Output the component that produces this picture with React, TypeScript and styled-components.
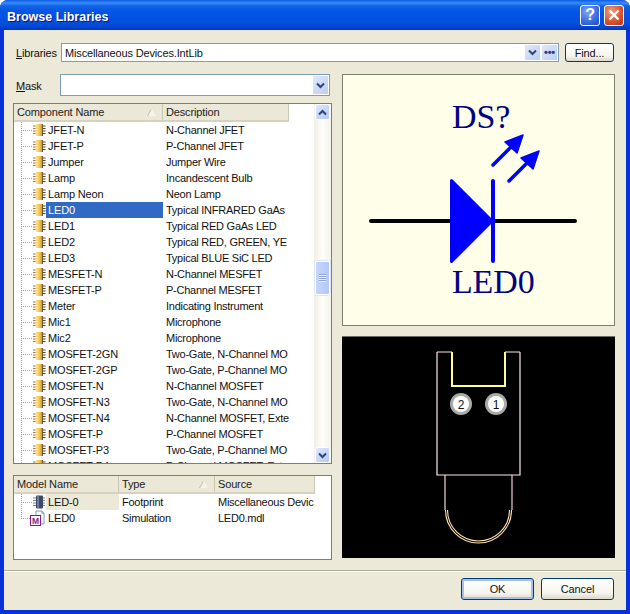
import styled, { createGlobalStyle } from "styled-components";

const GlobalStyle = createGlobalStyle`
  html, body {
    margin: 0;
    padding: 0;
    background: #fff;
  }
  * {
    box-sizing: border-box;
  }
`;

const Frame = styled.div`
  width: 630px;
  height: 614px;
  display: flex;
  flex-direction: column;
  border-radius: 8px 8px 0 0;
  overflow: hidden;
  background: #0831d9;
  font-family: "Liberation Sans", Arial, sans-serif;
  font-size: 11px;
  letter-spacing: -0.15px;
  color: #111;
`;

const TitleBar = styled.div`
  height: 30px;
  flex-shrink: 0;
  display: flex;
  align-items: center;
  padding: 3px 6px 0 7px;
  background: linear-gradient(
    to bottom,
    #0a5ae8 0,
    #3b8cf5 3px,
    #0f62e6 6px,
    #0355e4 12px,
    #0450e0 22px,
    #0346d2 27px,
    #0135b8 30px
  );
`;

const Title = styled.div`
  flex: 1;
  font-size: 12.5px;
  font-weight: bold;
  letter-spacing: 0;
  color: #fff;
  text-shadow: 1px 1px 1px #0f1089;
`;

const TitleButton = styled.div<{ $close?: boolean }>`
  width: 20px;
  height: 21px;
  margin: -3px 0 0 4px;
  border: 1px solid #fff;
  border-radius: 3px;
  display: flex;
  align-items: center;
  justify-content: center;
  font-size: 16px;
  font-weight: bold;
  color: #fff;
  background: ${(p) =>
    p.$close
      ? "radial-gradient(circle at 35% 30%, #f0a080, #d8502c 60%, #b83210)"
      : "radial-gradient(circle at 35% 30%, #7ea4f0, #3a6ae0 60%, #2246b8)"};
`;

const Client = styled.div`
  flex: 1;
  display: flex;
  flex-direction: column;
  margin: 0 4px 4px 4px;
  background: #ece9d8;
  min-height: 0;
`;

const Main = styled.div`
  padding: 13px 12px 0 9px;
`;

const LibraryRow = styled.div`
  display: flex;
  align-items: stretch;
  height: 19px;
  margin-bottom: 12px;
`;

const Label = styled.label`
  width: 48px;
  flex-shrink: 0;
  padding: 1px 0 0 3px;
  display: flex;
  align-items: center;
  u {
    text-decoration: underline;
  }
`;

const Combo = styled.div`
  flex: 1;
  display: flex;
  align-items: center;
  background: #fff;
  border: 1px solid #7f9db9;
  padding: 1px;
  gap: 2px;
`;

const ComboText = styled.div`
  flex: 1;
  padding-left: 2px;
  white-space: nowrap;
`;

const ComboButton = styled.div`
  width: 15px;
  height: 100%;
  display: flex;
  align-items: center;
  justify-content: center;
  background: linear-gradient(135deg, #dfe7fb, #bccdf6);
  border-radius: 1px;
  color: #2c3f78;
  font-size: 11px;
  font-weight: bold;
  line-height: 1;
`;

const PushButton = styled.button<{ $width: number; $isDefault?: boolean }>`
  width: ${(p) => p.$width}px;
  padding: 0;
  font: inherit;
  letter-spacing: inherit;
  color: #111;
  border: 1px solid #003c74;
  border-radius: 3px;
  background: linear-gradient(to bottom, #fff 0, #f6f5ee 70%, #dcd8cb 100%);
  box-shadow: ${(p) => (p.$isDefault ? "inset 0 0 0 2px #a6c0ea" : "none")};
`;

const FindButton = styled(PushButton)`
  margin-left: 6px;
`;

const Columns = styled.div`
  display: grid;
  grid-template-columns: 319px 273px;
  column-gap: 10px;
`;

const LeftColumn = styled.div`
  display: flex;
  flex-direction: column;
`;

const RightColumn = styled.div`
  display: flex;
  flex-direction: column;
  gap: 10px;
`;

const MaskRow = styled.div`
  display: flex;
  height: 22px;
  margin-bottom: 7px;
  padding-right: 2px;
`;

const MaskLabel = styled(Label)`
  width: 47px;
`;

const ListBox = styled.div<{ $height: number }>`
  height: ${(p) => p.$height}px;
  display: flex;
  background: #fff;
  border: 1px solid #7b7f74;
  overflow: hidden;
`;

const ListContent = styled.div`
  flex: 1;
  min-width: 0;
  overflow: hidden;
`;

const HeaderRow = styled.div`
  height: 18px;
  display: flex;
`;

const HeaderCell = styled.div<{ $width: number }>`
  width: ${(p) => p.$width}px;
  flex-shrink: 0;
  display: flex;
  align-items: center;
  justify-content: space-between;
  padding: 0 6px 0 3px;
  background: #ebe8d7;
  border-right: 1px solid #c9c6b4;
  border-bottom: 2px solid #d6d2bd;
  color: #222;
  white-space: nowrap;
`;

const SortMark = styled.span`
  width: 0;
  height: 0;
  border-left: 4px solid transparent;
  border-right: 4px solid transparent;
  border-bottom: 7px solid #f6f4ea;
  filter: drop-shadow(-1px 0 0 #c0bcaa);
`;

const Row = styled.div<{ $first: number; $second: number; $third?: number }>`
  height: 16px;
  display: grid;
  grid-template-columns: ${(p) => p.$first}px ${(p) => p.$second}px ${(p) =>
      p.$third ? `${p.$third}px` : ""};
  align-items: stretch;
`;

const TreeCell = styled.div`
  display: flex;
  align-items: center;
  padding-left: 7px;
  overflow: hidden;
`;

const Guide = styled.span<{ $last?: boolean }>`
  width: 12px;
  height: 16px;
  flex-shrink: 0;
  background-image: repeating-linear-gradient(
      to bottom,
      #a0a0a0 0 1px,
      transparent 1px 2px
    ),
    repeating-linear-gradient(to right, #a0a0a0 0 1px, transparent 1px 2px);
  background-repeat: no-repeat;
  background-position: 0 0, 0 8px;
  background-size: 1px ${(p) => (p.$last ? "9px" : "16px")}, 12px 1px;
`;

const IconSlot = styled.span`
  width: 12px;
  height: 14px;
  flex-shrink: 0;
  display: flex;
  svg {
    display: block;
    flex-shrink: 0;
  }
`;

const ModelSlot = styled(IconSlot)`
  width: 15px;
  height: 16px;
  margin-left: -3px;
`;

const NameText = styled.span<{ $state?: "selected" | "muted" }>`
  flex: 1;
  height: 16px;
  margin-left: 1px;
  padding-left: 2px;
  line-height: 16px;
  white-space: nowrap;
  background: ${(p) =>
    p.$state === "selected"
      ? "#316ac5"
      : p.$state === "muted"
        ? "#ece9d8"
        : "transparent"};
  color: ${(p) => (p.$state === "selected" ? "#fff" : "#111")};
`;

const TextCell = styled.div`
  padding-left: 3px;
  line-height: 16px;
  letter-spacing: -0.25px;
  white-space: nowrap;
  overflow: hidden;
`;

const ScrollBar = styled.div`
  width: 17px;
  flex-shrink: 0;
  display: flex;
  flex-direction: column;
  padding: 0 1px 0 1px;
  background: linear-gradient(to right, #f1efe4, #fdfdfa 50%, #f4f3ea);
`;

const ScrollButton = styled.div`
  height: 16px;
  flex-shrink: 0;
  display: flex;
  align-items: center;
  justify-content: center;
  border: 1px solid #fff;
  border-radius: 2px;
  background: linear-gradient(135deg, #dfe8fd, #b4c8f6);
`;

const ScrollTrack = styled.div`
  flex: 1;
  padding-top: 141px;
`;

const ScrollThumb = styled.div`
  height: 34px;
  display: flex;
  align-items: center;
  justify-content: center;
  border: 1px solid #fff;
  border-radius: 2px;
  background: linear-gradient(to right, #c6d5fa, #b3c8f6);
  box-shadow: 0 0 0 1px #dfe6f7;
`;

const Grip = styled.div`
  width: 7px;
  height: 8px;
  background: repeating-linear-gradient(
    to bottom,
    #8ea4d8 0 1px,
    #eef2fd 1px 2px
  );
`;

const ModelBox = styled(ListBox)`
  margin-top: 11px;
`;

const PreviewPanel = styled.div`
  height: 252px;
  background: #ffffe9;
  border: 1px solid #7f7f6f;
  svg {
    display: block;
  }
`;

const PcbPanel = styled.div`
  height: 222px;
  background: #000;
  border-top: 1px solid #6c6c60;
  svg {
    display: block;
  }
`;

const Footer = styled.div`
  margin-top: 10px;
  padding: 7px 12px 0 0;
  flex: 1;
  display: flex;
  align-items: flex-start;
  justify-content: flex-end;
  gap: 7px;
  border-top: 1px solid #aca899;
  box-shadow: inset 0 1px 0 #fff;
`;

const FooterButton = styled(PushButton)`
  height: 22px;
`;

const Chevron = ({ up }: { up?: boolean }) => (
  <svg width="9" height="7" viewBox="0 0 9 7">
    <path
      d={up ? "M1 5.5 L4.5 2 L8 5.5" : "M1 1.5 L4.5 5 L8 1.5"}
      fill="none"
      stroke="#2f4378"
      strokeWidth="2"
    />
  </svg>
);

const BookIcon = () => (
  <svg width="13" height="14" viewBox="0 0 13 14">
    <defs>
      <linearGradient id="book" x1="0" x2="1" y1="0" y2="0">
        <stop offset="0" stopColor="#ffe9a8" />
        <stop offset="0.55" stopColor="#f2c04e" />
        <stop offset="1" stopColor="#c98a22" />
      </linearGradient>
    </defs>
    <path d="M0 3h3M0 5.5h3M0 8h3M0 10.5h3" stroke="#a87830" strokeWidth="1" />
    <path
      d="M9.5 3h3M9.5 5.5h3M9.5 8h3M9.5 10.5h3"
      stroke="#50442a"
      strokeWidth="1"
    />
    <rect x="2.5" y="1" width="7.5" height="12" rx="1" fill="url(#book)" />
    <rect x="9" y="1" width="1" height="12" fill="#6b5a30" />
  </svg>
);

const ChipIcon = () => (
  <svg width="13" height="14" viewBox="0 0 13 14">
    <path d="M0 3h12M0 5.5h12M0 8h12M0 10.5h12" stroke="#7a8090" />
    <rect x="3" y="0.5" width="7" height="13" rx="1" fill="#3d4a66" />
    <rect x="4" y="1" width="2" height="12" fill="#6c7c9c" />
  </svg>
);

const ModelIcon = () => (
  <svg width="15" height="16" viewBox="0 0 15 16">
    <path d="M6 1h6l2 2v11H6z" fill="#fff" stroke="#8a94a8" />
    <path d="M12 1v2h2" fill="#c8d4ec" stroke="#8a94a8" />
    <rect x="0.5" y="5.5" width="10" height="10" fill="#fff" stroke="#8a1a8a" />
    <text
      x="5.5"
      y="13.5"
      textAnchor="middle"
      fontFamily="Liberation Sans, sans-serif"
      fontSize="8.5"
      fontWeight="bold"
      fill="#8a1a8a"
    >
      M
    </text>
  </svg>
);

const LedSymbol = () => (
  <svg width="271" height="250" viewBox="343 75 271 250">
    <text x="452" y="128" fontFamily="Liberation Serif, serif" fontSize="34" fill="#000080">
      DS?
    </text>
    <text x="452" y="293" fontFamily="Liberation Serif, serif" fontSize="34" fill="#000080">
      LED0
    </text>
    <path d="M371 221H575" stroke="#000" strokeWidth="4" strokeLinecap="round" />
    <path d="M451.5 180.5 L492 221 L451.5 261.5 Z" fill="#0000ff" stroke="#0000ff" strokeWidth="3" strokeLinejoin="round" />
    <path d="M493 181V261" stroke="#0000ff" strokeWidth="4" strokeLinecap="round" />
    <path d="M493 165 L512 146" stroke="#0000ff" strokeWidth="3.5" strokeLinecap="round" />
    <path d="M523 135 L505 142 L517 153 Z" fill="#0000ff" stroke="#0000ff" strokeWidth="1.5" strokeLinejoin="round" />
    <path d="M509 181 L528 162" stroke="#0000ff" strokeWidth="3.5" strokeLinecap="round" />
    <path d="M539 151 L521 158 L533 169 Z" fill="#0000ff" stroke="#0000ff" strokeWidth="1.5" strokeLinejoin="round" />
  </svg>
);

const Pad = ({ cx, label }: { cx: number; label: string }) => (
  <g>
    <circle cx={cx} cy="74" r="11" fill="#a9aba6" />
    <circle cx={cx} cy="74" r="8" fill="#fff" />
    <text
      x={cx}
      y="78.5"
      textAnchor="middle"
      fontFamily="Liberation Sans, sans-serif"
      fontSize="12"
      fill="#111"
    >
      {label}
    </text>
  </g>
);

// coordinates below are window pixels, shifted back by the panel origin
const Footprint = () => (
  <svg width="273" height="221" viewBox="0 0 273 221">
    <g transform="translate(-342 -337)">
      <path d="M437 352H452M505 352H520M437 352V475H520V352" fill="none" stroke="#ffe6ee" strokeWidth="1.2" />
      <path d="M452 352V386H505V352" fill="none" stroke="#ffff90" strokeWidth="2" />
      <path d="M445 475V510" stroke="#f6dcc0" strokeWidth="1.2" fill="none" />
      <path d="M512 475V510" stroke="#f0c8e0" strokeWidth="1.2" fill="none" />
      <path d="M445.5 510 A33 33 0 0 0 511.5 510" fill="none" stroke="#ffe0b0" strokeWidth="1.1" />
      <path d="M447.5 510 A31 31 0 0 0 509.5 510" fill="none" stroke="#ffe0b0" strokeWidth="1.1" />
    </g>
    <g transform="translate(-342 -7)">
      <Pad cx={461} label="2" />
      <Pad cx={496} label="1" />
    </g>
  </svg>
);

const components: [string, string][] = [
  ["JFET-N", "N-Channel JFET"],
  ["JFET-P", "P-Channel JFET"],
  ["Jumper", "Jumper Wire"],
  ["Lamp", "Incandescent Bulb"],
  ["Lamp Neon", "Neon Lamp"],
  ["LED0", "Typical INFRARED GaAs"],
  ["LED1", "Typical RED GaAs LED"],
  ["LED2", "Typical RED, GREEN, YE"],
  ["LED3", "Typical BLUE SiC LED"],
  ["MESFET-N", "N-Channel MESFET"],
  ["MESFET-P", "P-Channel MESFET"],
  ["Meter", "Indicating Instrument"],
  ["Mic1", "Microphone"],
  ["Mic2", "Microphone"],
  ["MOSFET-2GN", "Two-Gate, N-Channel MO"],
  ["MOSFET-2GP", "Two-Gate, P-Channel MO"],
  ["MOSFET-N", "N-Channel MOSFET"],
  ["MOSFET-N3", "Two-Gate, N-Channel MO"],
  ["MOSFET-N4", "N-Channel MOSFET, Exte"],
  ["MOSFET-P", "P-Channel MOSFET"],
  ["MOSFET-P3", "Two-Gate, P-Channel MO"],
  ["MOSFET-P4", "P-Channel MOSFET, Exte"],
];

const App = () => {
  return (
    <>
      <GlobalStyle />
      <Frame>
        <TitleBar>
          <Title>Browse Libraries</Title>
          <TitleButton>?</TitleButton>
          <TitleButton $close>
            <svg width="12" height="12" viewBox="0 0 12 12">
              <path d="M1.5 1.5L10.5 10.5M10.5 1.5L1.5 10.5" stroke="#fff" strokeWidth="2.4" />
            </svg>
          </TitleButton>
        </TitleBar>
        <Client>
          <Main>
            <LibraryRow>
              <Label>
                <span>
                  <u>L</u>ibraries
                </span>
              </Label>
              <Combo>
                <ComboText>Miscellaneous Devices.IntLib</ComboText>
                <ComboButton>
                  <Chevron />
                </ComboButton>
                <ComboButton>•••</ComboButton>
              </Combo>
              <FindButton $width={49}>Find...</FindButton>
            </LibraryRow>
            <Columns>
              <LeftColumn>
                <MaskRow>
                  <MaskLabel>
                    <span>
                      <u>M</u>ask
                    </span>
                  </MaskLabel>
                  <Combo>
                    <ComboText />
                    <ComboButton>
                      <Chevron />
                    </ComboButton>
                  </Combo>
                </MaskRow>
                <ListBox $height={361}>
                  <ListContent>
                    <HeaderRow>
                      <HeaderCell $width={149}>
                        Component Name
                        <SortMark />
                      </HeaderCell>
                      <HeaderCell $width={126}>Description</HeaderCell>
                    </HeaderRow>
                    {components.map(([name, description]) => (
                      <Row key={name} $first={149} $second={126}>
                        <TreeCell>
                          <Guide />
                          <IconSlot>
                            <BookIcon />
                          </IconSlot>
                          <NameText $state={name === "LED0" ? "selected" : undefined}>
                            {name}
                          </NameText>
                        </TreeCell>
                        <TextCell>{description}</TextCell>
                      </Row>
                    ))}
                  </ListContent>
                  <ScrollBar>
                    <ScrollButton>
                      <Chevron up />
                    </ScrollButton>
                    <ScrollTrack>
                      <ScrollThumb>
                        <Grip />
                      </ScrollThumb>
                    </ScrollTrack>
                    <ScrollButton>
                      <Chevron />
                    </ScrollButton>
                  </ScrollBar>
                </ListBox>
                <ModelBox $height={85}>
                  <ListContent>
                    <HeaderRow>
                      <HeaderCell $width={105}>Model Name</HeaderCell>
                      <HeaderCell $width={96}>
                        Type
                        <SortMark />
                      </HeaderCell>
                      <HeaderCell $width={100}>Source</HeaderCell>
                    </HeaderRow>
                    <Row $first={105} $second={96} $third={100}>
                      <TreeCell>
                        <Guide />
                        <IconSlot>
                          <ChipIcon />
                        </IconSlot>
                        <NameText $state="muted">LED-0</NameText>
                      </TreeCell>
                      <TextCell>Footprint</TextCell>
                      <TextCell>Miscellaneous Devic</TextCell>
                    </Row>
                    <Row $first={105} $second={96} $third={100}>
                      <TreeCell>
                        <Guide $last />
                        <ModelSlot>
                          <ModelIcon />
                        </ModelSlot>
                        <NameText>LED0</NameText>
                      </TreeCell>
                      <TextCell>Simulation</TextCell>
                      <TextCell>LED0.mdl</TextCell>
                    </Row>
                  </ListContent>
                </ModelBox>
              </LeftColumn>
              <RightColumn>
                <PreviewPanel>
                  <LedSymbol />
                </PreviewPanel>
                <PcbPanel>
                  <Footprint />
                </PcbPanel>
              </RightColumn>
            </Columns>
          </Main>
          <Footer>
            <FooterButton $width={73} $isDefault>
              OK
            </FooterButton>
            <FooterButton $width={73}>Cancel</FooterButton>
          </Footer>
        </Client>
      </Frame>
    </>
  );
};

export default App;
